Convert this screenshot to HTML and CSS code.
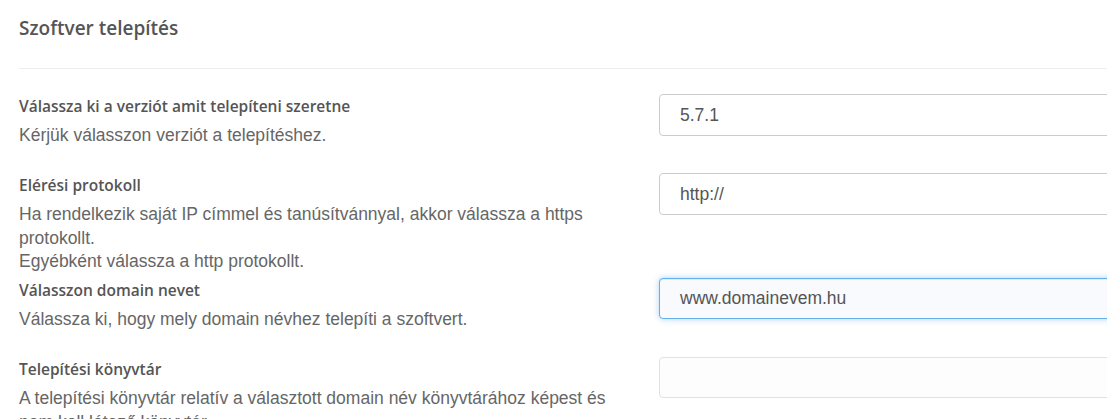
FILE: index.html
```html
<!DOCTYPE html>
<html lang="hu">
<head>
<meta charset="utf-8">
<title>Szoftver telepítés</title>
<link rel="stylesheet" href="styles.css">
</head>
<body>
<div class="page">
  <h2 class="title">Szoftver telepítés</h2>
  <div class="divider"></div>

  <div class="row">
    <div class="info">
      <div class="label">Válassza ki a verziót amit telepíteni szeretne</div>
      <div class="desc">Kérjük válasszon verziót a telepítéshez.</div>
    </div>
    <div class="field"><div class="input">5.7.1</div></div>
  </div>

  <div class="row">
    <div class="info">
      <div class="label">Elérési protokoll</div>
      <div class="desc">Ha rendelkezik saját IP címmel és tanúsítvánnyal, akkor válassza a https protokollt.</div>
      <div class="desc overflow">Egyébként válassza a http protokollt.</div>
    </div>
    <div class="field"><div class="input">http://</div></div>
  </div>

  <div class="row">
    <div class="info">
      <div class="label">Válasszon domain nevet</div>
      <div class="desc">Válassza ki, hogy mely domain névhez telepíti a szoftvert.</div>
    </div>
    <div class="field"><div class="input focus">www.domainevem.hu</div></div>
  </div>

  <div class="row">
    <div class="info">
      <div class="label">Telepítési könyvtár</div>
      <div class="desc">A telepítési könyvtár relatív a választott domain név könyvtárához képest és nem kell létező könyvtár.</div>
    </div>
    <div class="field"><div class="input light"></div></div>
  </div>
</div>
</body>
</html>
```

FILE: styles.css
```css
html, body {
  margin: 0;
  padding: 0;
  background: #fff;
  overflow: hidden;
}

.page {
  padding-left: 19px;
  width: 1300px;
}

.title {
  margin: 0;
  padding-top: 15px;
  font-family: "Open Sans", sans-serif;
  font-weight: 600;
  font-size: 19px;
  line-height: 27px;
  color: #555;
}

.divider {
  margin-top: 26px;
  margin-bottom: 25px;
  border-top: 1px solid #eee;
}

.row {
  display: flex;
  gap: 30px;
  padding-bottom: 25.5px;
}

.info {
  width: 610px;
  flex: none;
}

.label {
  margin-top: 1.5px;
  font-family: "Open Sans", sans-serif;
  font-weight: 600;
  font-size: 15.5px;
  line-height: 20px;
  color: #555;
}

.desc {
  font-family: "Liberation Sans", Arial, sans-serif;
  font-size: 17.5px;
  line-height: 23.5px;
  color: #666;
}

.label + .desc {
  margin-top: 8.5px;
}

.desc.overflow {
  margin-bottom: -21px;
}

.field {
  flex: none;
  width: 600px;
}

.input {
  box-sizing: border-box;
  height: 42px;
  padding: 0 20px;
  border: 1px solid #ccc;
  border-radius: 4px;
  background: #fff;
  font-family: "Liberation Sans", Arial, sans-serif;
  font-size: 17.5px;
  line-height: 40px;
  color: #555;
}

.input.focus {
  height: 41px;
  line-height: 39px;
  border-color: #66afe9;
  background: #f8fafd;
  box-shadow: inset 0 1px 1px rgba(0, 0, 0, 0.075), 0 0 6px rgba(102, 175, 233, 0.55);
}

.input.light {
  height: 41px;
  border-color: #e2e2e2;
  background: #fdfdfd;
}
```
